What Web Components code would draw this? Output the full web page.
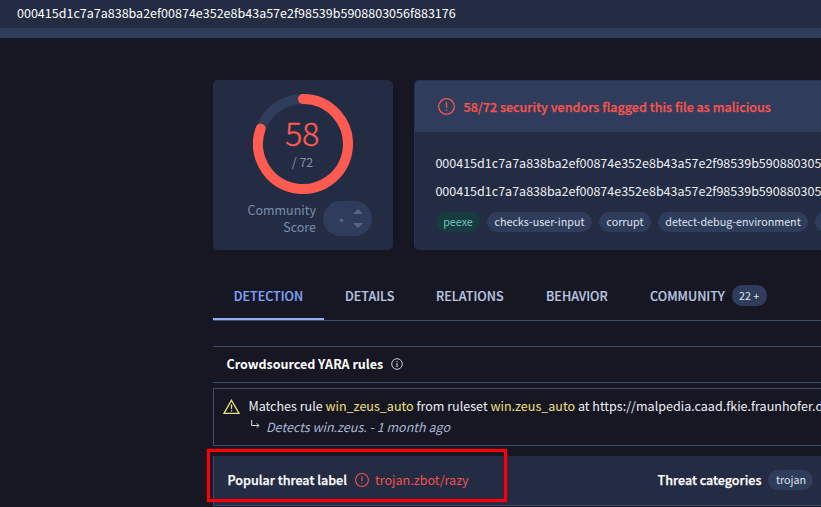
<!DOCTYPE html>
<html lang="en">
<head>
<meta charset="utf-8">
<title>File report</title>
<style>
html,body{margin:0;background:#171723}
body{width:821px;height:507px;overflow:hidden}
</style>
</head>
<body>
<vt-report></vt-report>
<script>
const define = (name, html) => {
  const t = document.createElement('template');
  t.innerHTML = html;
  customElements.define(name, class extends HTMLElement {
    constructor() {
      super();
      this.attachShadow({mode: 'open'}).append(t.content.cloneNode(true));
    }
  });
};

define('vt-alert-icon', `
<style>:host{display:block;flex:none;width:17px;height:17px;color:#f5554f}svg{display:block;width:100%;height:100%}</style>
<svg viewBox="0 0 17 17" fill="none" stroke="currentColor"><circle cx="8.5" cy="8.5" r="7.8" stroke-width="1.3"/><path d="M8.5 4.2v5.5M8.5 11.2v1.5" stroke-width="1.3"/></svg>`);

define('vt-chip', `
<style>
:host{display:flex;justify-content:center;flex:none;box-sizing:border-box;height:20px;border-radius:10px;background:#2f3c5b;color:#dfe4f0;font-size:10.75px;line-height:18px;padding-top:1px;white-space:nowrap;-webkit-text-stroke:0}
:host([kind=type]){background:#173b3f;color:#6fc5c0}
</style><slot></slot>`);

define('vt-topbar', `
<style>
:host{display:block;box-sizing:border-box;height:38px;background:#242c43;border-bottom:10px solid #2f3c5b;padding-left:17px;color:#fff;font-size:12.53px;line-height:26px;white-space:nowrap}
</style><slot></slot>`);

define('vt-score', `
<style>
:host{display:flex;flex-direction:column;align-items:center;flex:none;box-sizing:border-box;width:180px;height:170px;background:#242c43;border-radius:5px;padding-top:14px}
.ring{display:grid;width:100px;height:100px}
.ring>*{grid-area:1/1}
.n{text-align:center;color:#ff5b51}
.n b{display:block;font-weight:300;font-size:32.5px;line-height:40px;margin:18px 2px 0 0;letter-spacing:-.3px;-webkit-text-stroke:.3px}
.n span{display:block;font-size:12.5px;font-weight:400;line-height:16px;margin-top:2px;padding-right:1px;color:#8292b0}
.c{display:flex;align-self:stretch;margin-top:7px;padding-right:21px;justify-content:flex-end;gap:7px}
.l{text-align:right;font-size:12.5px;line-height:17px;color:#7c8cab}
.p{width:49px;height:35px;border-radius:17.5px;background:#2f3c5b}
</style>
<div class="ring">
<svg viewBox="0 0 100 100" fill="none" stroke-width="10"><circle cx="50" cy="50" r="45" stroke="#2f3c5b"/><path d="M50 5A45 45 0 1 1 7.7 34.6" stroke="#ff5b51" stroke-linecap="round"/></svg>
<div class="n"><b>58</b><span>/ 72</span></div></div>
<div class="c"><div class="l">Community<br>Score</div><div class="p"><svg width="49" height="35"><g fill="#59657d"><circle cx="18.4" cy="19.3" r="1.8"/><path d="M30 13l5-5 5 5zM30 22l5 5 5-5z"/></g></svg></div></div>`);

define('vt-summary', `
<style>
:host{display:block;flex:1;min-width:0;box-sizing:border-box;height:170px;background:#242c43;border:1px solid #29334d;border-right:0;border-bottom:0;border-radius:5px 0 0 5px;overflow:hidden;white-space:nowrap}
header{display:flex;align-items:center;gap:8.5px;height:51px;background:#2f3c5b;padding-left:23px;color:#f5554f;font-weight:500;font-size:12.59px;-webkit-text-stroke:.25px}
.h{padding-left:20.4px;color:#eceff6;font-size:12.53px;line-height:28px}
.body{padding-top:17px}
.tags{display:flex;gap:7px;padding:7px 0 0 21px}
</style>
<header><vt-alert-icon></vt-alert-icon><slot name="verdict"></slot></header>
<div class="body"><div class="h"><slot name="hash"></slot></div><div class="h"><slot name="name"></slot></div><div class="tags"><slot></slot></div></div>`);

define('vt-tab', `
<style>
:host{display:flex;align-items:center;box-sizing:border-box;height:48px;gap:7px;color:#b8c7e0;font-weight:500;font-size:12.55px;line-height:20px;white-space:nowrap;-webkit-text-stroke:.15px}
:host([active]){color:#82a4f8;border-bottom:2px solid #8fafff;padding-top:2px}
</style><slot></slot>`);

define('vt-tabs', `
<style>:host{display:flex;height:48px;border-bottom:1px solid #3c4a6b}</style><slot></slot>`);

define('vt-section-title', `
<style>
:host{display:flex;align-items:center;gap:8px;box-sizing:border-box;height:37px;border:solid #3c4a6b;border-width:1px 0;padding:0 0 2px 13.5px;color:#fff;font-weight:700;font-size:12.5px;line-height:20px}
</style><slot></slot>
<svg width="12" height="12" viewBox="0 0 12 12" fill="none" stroke="#c9ccd4"><circle cx="6" cy="6" r="5.3"/><path d="M6 5.2V9M6 3v1.2" stroke-width="1.2"/></svg>`);

define('vt-rule', `
<style>
:host{display:grid;grid-template-columns:17px auto;column-gap:8.5px;align-content:start;box-sizing:border-box;height:58px;border:1px solid #3c4a6b;border-right:0;padding:7px 0 0 9px;color:#eceff6;font-size:12.54px;line-height:20px;white-space:nowrap;overflow:hidden}
.s{grid-column:2;display:flex;gap:6.5px;color:#a9b8d5;font-style:italic;padding:1px 0 0 2px}
.s svg{margin-top:3px;flex:none}
</style>
<svg width="17" height="16" viewBox="0 0 17 16" fill="none" stroke="#eee07c" stroke-width="1.3" style="margin-top:3px"><path d="M8.5 1.2L16 14.4H1z"/><path d="M8.5 5.5v4.5M8.5 11.2v1.4"/></svg>
<div><slot></slot></div>
<div class="s"><svg width="9" height="9" viewBox="0 0 9 9" fill="none" stroke="#dfe4ee"><path d="M.7 0v5.5h7.2M5.7 3.3l2.2 2.2-2.2 2.2"/></svg><span><slot name="note"></slot></span></div>`);

define('vt-threat', `
<style>
:host{display:flex;align-items:center;box-sizing:border-box;height:50px;background:#242c43;border:solid #3c4a6b;border-width:0 0 1px 1px;padding:0 0 2px 13.5px;color:#fff;font-size:12.57px;line-height:20px;white-space:nowrap}
.label{display:flex;align-items:center;width:430px;font-weight:500;-webkit-text-stroke:.25px}
vt-alert-icon{width:14px;height:14px;margin:0 5.5px 0 8.5px}
.v{font-weight:400;color:#f0524f;-webkit-text-stroke:0}
.cat{display:flex;align-items:center;gap:7px;font-weight:500;-webkit-text-stroke:.25px}
</style>
<div class="label"><span><slot name="label"></slot></span><vt-alert-icon></vt-alert-icon><span class="v"><slot name="value"></slot></span></div>
<div class="cat"><slot name="cat"></slot></div>`);

define('vt-highlight', `
<style>:host{position:absolute;box-sizing:border-box;left:207px;top:449px;width:300px;height:53px;border:3px solid #fb0008;box-shadow:0 0 1px #d00008,inset 0 0 1px #d00008;pointer-events:none}</style>`);

define('vt-report', `
<style>
:host{display:block;position:relative;width:821px;height:507px;overflow:hidden;background:#171723;font-family:"Noto Sans CJK SC","Noto Sans",sans-serif}
main{display:block;padding:42px 0 0 213px}
.top{display:flex;gap:21px}
vt-tabs{margin-top:22px}
vt-section-title{margin-top:25px}
vt-rule{margin-top:5px}
vt-threat{margin-top:10px}
em{font-style:normal;color:#eee07c}
</style>
<vt-topbar>000415d1c7a7a838ba2ef00874e352e8b43a57e2f98539b5908803056f883176</vt-topbar>
<main>
<div class="top"><vt-score></vt-score>
<vt-summary><span slot="verdict">58/72 security vendors flagged this file as malicious</span>
<span slot="hash">000415d1c7a7a838ba2ef00874e352e8b43a57e2f98539b5908803056f883176</span>
<span slot="name">000415d1c7a7a838ba2ef00874e352e8b43a57e2f98539b5908803056f883176</span>
<vt-chip kind="type" style="width:44px">peexe</vt-chip><vt-chip style="width:105px">checks-user-input</vt-chip><vt-chip style="width:52px">corrupt</vt-chip><vt-chip style="width:150px">detect-debug-environment</vt-chip><vt-chip style="width:60px"></vt-chip></vt-summary></div>
<vt-tabs><vt-tab active style="width:111px;justify-content:center">DETECTION</vt-tab><vt-tab style="margin-left:21px;width:91px">DETAILS</vt-tab><vt-tab style="width:110px">RELATIONS</vt-tab><vt-tab style="width:104px">BEHAVIOR</vt-tab><vt-tab>COMMUNITY <vt-chip style="width:35px;height:21px;font-weight:400;line-height:20px;margin-bottom:1px">22 +</vt-chip></vt-tab></vt-tabs>
<vt-section-title>Crowdsourced YARA rules</vt-section-title>
<vt-rule>Matches rule <em>win_zeus_auto</em> from ruleset <em>win.zeus_auto</em> at https://malpedia.caad.fkie.fraunhofer.de/<span slot="note">Detects win.zeus. - 1 month ago</span></vt-rule>
<vt-threat><span slot="label">Popular threat label</span><span slot="value">trojan.zbot/razy</span><span slot="cat">Threat categories</span><vt-chip slot="cat" style="width:45px;font-weight:400">trojan</vt-chip></vt-threat>
</main>
<vt-highlight></vt-highlight>`);
</script>
</body>
</html>
